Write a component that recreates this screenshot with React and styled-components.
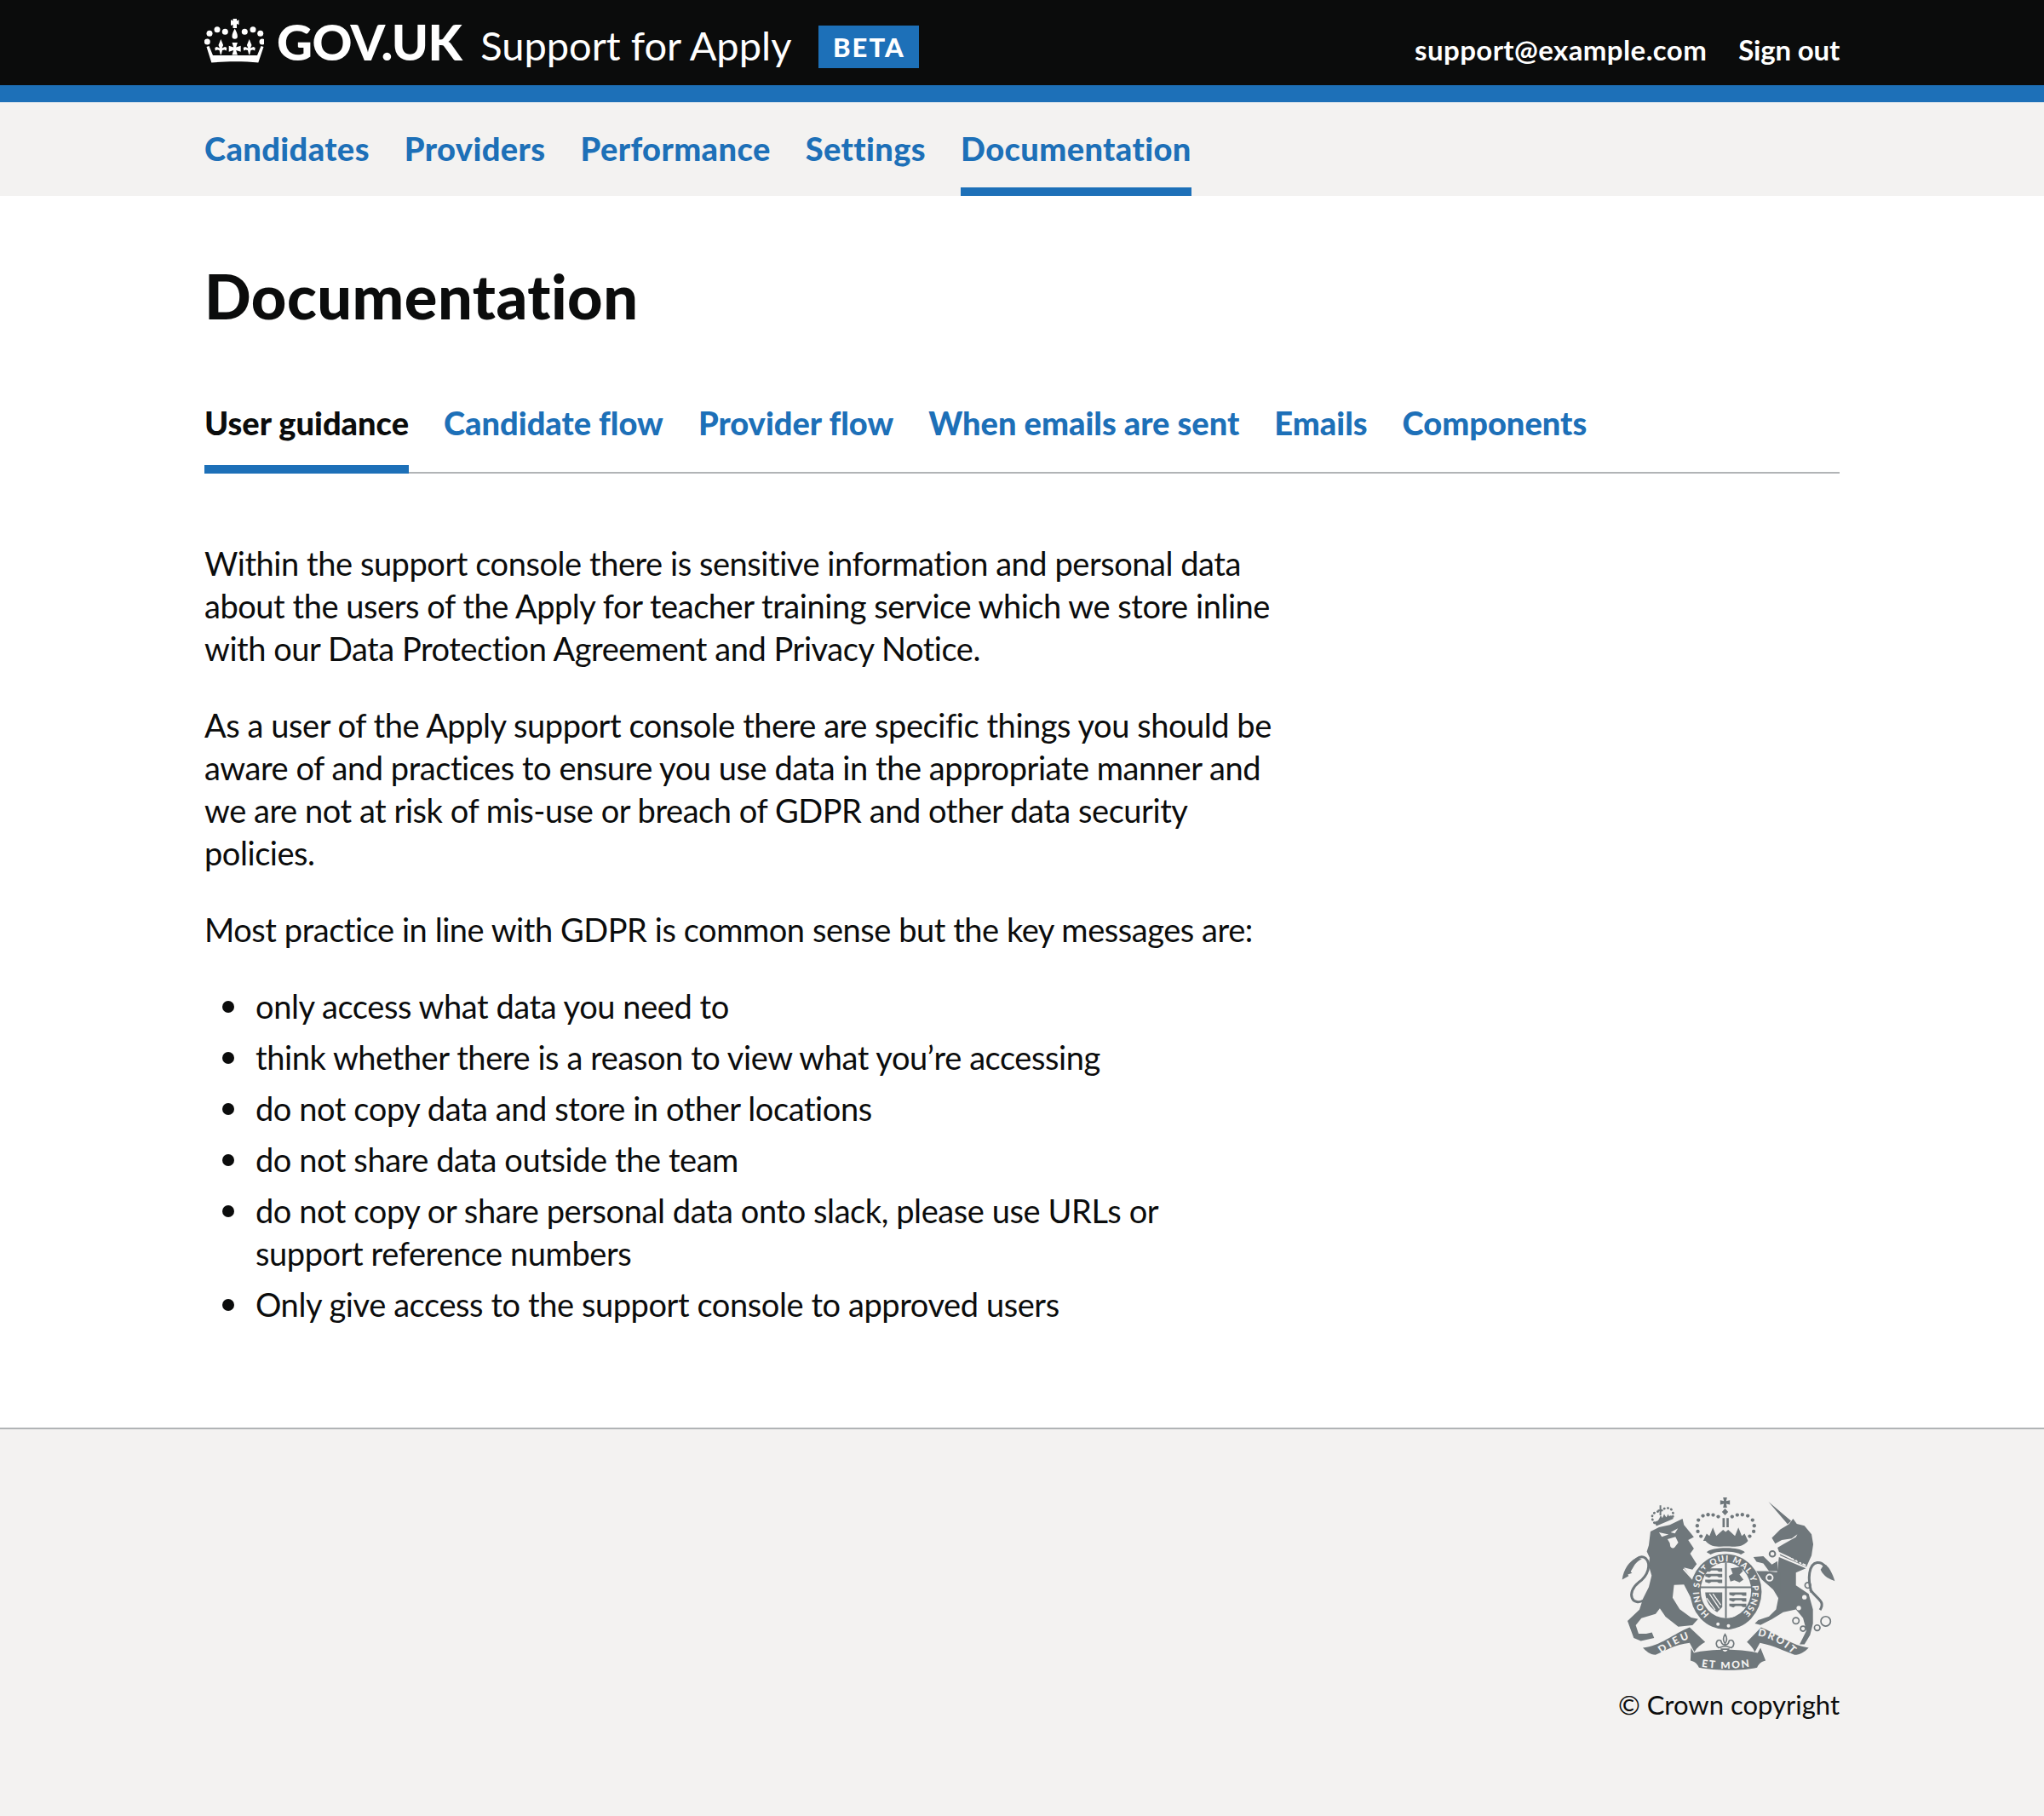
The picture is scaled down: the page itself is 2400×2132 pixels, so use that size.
import React from 'react'
import styled, { createGlobalStyle } from 'styled-components'

const GlobalStyle = createGlobalStyle`
  html, body {
    margin: 0;
    padding: 0;
    background: #fff;
    color: #0b0c0c;
    font-family: "Lato", "Noto Sans", sans-serif;
  }

  /* the font shorthand resets this, so it has to be forced */
  * {
    font-variant-ligatures: none !important;
  }
`

const Page = styled.div`
  height: 2132px;
  display: flex;
  flex-direction: column;
`

const Container = styled.div`
  width: 1920px;
  margin: 0 auto;
`

const Header = styled.header`
  background: #0b0c0c;
  border-bottom: 20px solid #1d70b8;
`

const HeaderInner = styled(Container)`
  height: 100px;
  display: flex;
  justify-content: space-between;
  color: #fff;
`

const Brand = styled.div`
  display: flex;
  align-items: flex-start;
`

const LogoMark = styled.svg`
  margin-top: 20px;
  fill: #fff;
`

const Wordmark = styled.span`
  font: 900 58px/1 "Lato", sans-serif;
  letter-spacing: -0.6px;
  margin: 20px 0 0 15px;
`

const ServiceName = styled.span`
  font: 400 47px/1 "Lato", sans-serif;
  margin: 30px 0 0 22px;
`

const BetaTag = styled.span`
  background: #1d70b8;
  font: 900 31px/50px "Lato", sans-serif;
  letter-spacing: 2px;
  width: 118px;
  text-align: center;
  margin: 30px 0 0 32px;
`

const AccountLinks = styled.div`
  display: flex;
  gap: 37px;
  padding-top: 39px;
  font: 700 33px/38px "Lato", sans-serif;
`

const AccountLink = styled.span`
  letter-spacing: ${(p) => p.$tracking};
`

const PrimaryNav = styled.nav`
  background: #f3f2f1;
`

const NavList = styled(Container)`
  height: 110px;
  display: flex;
  gap: 41px;
`

const NavItem = styled.a`
  height: 110px;
  box-sizing: border-box;
  padding-top: 29px;
  font: 900 38px/50px "Lato", sans-serif;
  letter-spacing: 0.4px;
  color: #1d70b8;
  border-bottom: ${(p) => (p.$active ? '10px solid #1d70b8' : '0')};
`

const Main = styled(Container)`
  flex: 1;
`

const Title = styled.h1`
  font: 900 72px/80px "Lato", sans-serif;
  letter-spacing: 0.5px;
  margin: 0;
  padding-top: 77px;
`

const Tabs = styled.div`
  display: flex;
  gap: 41px;
  margin-top: 72px;
  height: 95px;
  border-bottom: 2px solid #b1b4b6;
`

const Tab = styled.a`
  height: 97px;
  box-sizing: border-box;
  padding-top: 12px;
  font: 900 38px/50px "Lato", sans-serif;
  color: ${(p) => (p.$active ? '#0b0c0c' : '#1d70b8')};
  border-bottom: ${(p) => (p.$active ? '10px solid #1d70b8' : '0')};
`

const Body = styled.div`
  width: 1260px;
  padding-top: 80px;
`

const Para = styled.p`
  font: 400 38px/50px "Lato", sans-serif;
  letter-spacing: -0.45px;
  margin: 0 0 40px;
`

const List = styled.ul`
  list-style: none;
  margin: 0;
  padding: 0 20px 0 60px;
`

const Item = styled.li`
  position: relative;
  font: 400 38px/50px "Lato", sans-serif;
  letter-spacing: -0.42px;
  margin-bottom: 10px;

  &::before {
    content: '';
    position: absolute;
    left: -39px;
    top: 19px;
    width: 14px;
    height: 14px;
    border-radius: 50%;
    background: #0b0c0c;
  }
`

const Footer = styled.footer`
  background: #f3f2f1;
  border-top: 2px solid #b1b4b6;
  height: 456px;
  box-sizing: border-box;
`

const FooterInner = styled(Container)`
  display: flex;
  flex-direction: column;
  align-items: flex-end;
  padding-top: 78px;
`

const CrestMark = styled.svg`
  margin-right: 3px;
  font-family: "Lato", sans-serif;
  font-weight: 900;
`

const Copyright = styled.span`
  font: 400 31px/40px "Lato", sans-serif;
  margin-top: 18px;
`

const CrownLogo = () => (
  <LogoMark width="70" height="60" viewBox="20 10 70 60">
    <path d="M53.500 12h4.500v2.500l2.500-1.200v5.800l-2.500-1.200V23h-4.500v-4.100L51 20.100v-6.800l2.500 1.200z" />
    <path d="M55.700 23.500c1.500 3 3.200 6 3.200 9a3.200 3.200 0 0 1-6.400 0c0-3 1.700-6 3.200-9z" />
    {[[26, 29.3], [35, 24.7], [44.3, 27.3], [67.3, 27.3], [77, 24.7], [85.7, 29.3], [23.3, 39], [88, 39]].map(([x, y]) => (
      <circle key={x} cx={x} cy={y} r="3.500" />
    ))}
    <path d="M22.500 45l3-1 4.500 11h52l4.500-11 3 1-6.200 18.500c-16-1.600-39-1.600-55 0z" />
    {[39.3, 72.7].map((x) => (
      <path key={x} d={`M${x} 36l2.800 7-1.500 3.500 3.500-1.500 2.200 1-.5 3.500-2.200-1-2.500.5-.8 3-.5 2h-1l-.5-2-.8-3-2.500-.5-2.200 1-.5-3.500 2.200-1 3.500 1.500-1.500-3.500z`} />
    ))}
    <path d="M52.500 40h6.400l-1.700 5.500 5.500-1.700v7l-5.500-1.700 1.700 5.400h-6.400l1.700-5.400-5.500 1.700v-7l5.500 1.700z" />
  </LogoMark>
)

const Ink = '#6f777b'
const Paper = '#f3f2f1'

const Crest = () => (
  <CrestMark width="253" height="207" viewBox="130 80 760 620">
    {/* lion */}
    <path fill={Ink} d="M232 205l30-15 38-8 45-22 5 22 35 43-20 10 20 30-13 18 23 37-15 20-30-8 35 48 15 45-25 15-25-48-35 2-5 45 25 40 40 30 25 5-20 22-50 5-45-35-20-30-15 20-50 15-20 25 10 30 27 0 20-5 8 20-47 10-25-10-22-60 42-40 13-40 20-40 10-40-10-35 3-28-10-22 7-22z" />
    <path fill={Paper} d="M262 208l34 8-24 8zM303 208l26-14-11 18zM292 232l28-8 10 20-12 16a9 9 0 0 1-16-2l-2-12zM350 335l36 40-4 4-36-40z" />
    <path fill="none" stroke={Ink} strokeWidth="9" d="M215 445c-50 30-70-25-25-60 35-25 45-65 25-85-20-15-45 5-60 45" />
    <path fill={Ink} d="M132 375c5-35 25-65 48-75l22 2c-22 8-30 28-40 45l5 5-15 5 3 5z" />
    <path fill="none" stroke={Ink} strokeWidth="8" strokeDasharray="1 12" strokeLinecap="round" d="M246 175c-20-25 0-42 18-40 15-15 40-18 46 0 4 12 2 18-3 24" />
    <path fill={Ink} d="M245 172l60-24 8 12-60 26zM258 128h6v-15h6v15h6v6h-6v14h-6v-14h-6zM262 162l6-14 6 10 6-14 8 12 6-12 5 10-45 18z" />
    {/* unicorn */}
    <path fill={Ink} d="M648 100l80 68-12 12zM660 228l30-30 30-18 15-20 13 18 27 7 25 30 6 35-6 40-18 40-92-40-10-28 20-12 45-25 5-10-20 15-35 5-23 13z" />
    <path fill={Ink} d="M685 295l95 40-35 15v45l45 30 15 55v50l-10 40-20 33h-17l24-48-12-45-25-30-45 10-40 25-40 20-20-5 12-12 38-13 25-25 8-40-18-30 15-70z" />
    <path fill={Ink} d="M680 310l-20 12-30-30-35 3 11 17 24 6 20 27h30zM690 350l-50-5-35 0 20 30 40 35 25 10z" />
    <path fill="none" stroke={Paper} strokeWidth="6" d="M685 280l95 45" />
    <path fill={Ink} d="M688 262l8 14 6-8 5 14 7-6 4 14 8-5 3 14 8-4 2 13 10-4 3 13 10-6 4 12 8-12-82-42z" />
    <circle cx="652" cy="368" r="11" fill="none" stroke={Paper} strokeWidth="6" />
    <circle cx="662" cy="284" r="10" fill="none" stroke={Ink} strokeWidth="6" />
    {[[775, 437], [755, 475]].map(([x, y]) => (
      <circle key={x} cx={x} cy={y} r="8" fill={Paper} />
    ))}
    {[[787, 395, 10], [745, 520, 11], [770, 548, 9], [820, 545, 10], [850, 522, 17]].map(([x, y, r]) => (
      <circle key={x} cx={x} cy={y} r={r} fill="none" stroke={Ink} strokeWidth="5" />
    ))}
    <path fill="none" stroke={Ink} strokeWidth="9" d="M800 420c-15-50-10-100 20-105 25-3 35 25 50 55M795 410c25 35 55 40 35 72" />
    <path fill={Ink} d="M845 320c15 5 30 35 37 60-15-5-40-15-50-40z" />
    {/* royal crown */}
    {[[397, 185], [401, 165], [417, 150], [435, 146], [453, 147], [471, 153], [520, 153], [538, 147], [556, 146], [575, 150], [592, 165], [598, 185], [596, 205], [582, 222], [410, 222], [399, 205]].map(([x, y]) => (
      <circle key={`${x}-${y}`} cx={x} cy={y} r="6.500" fill={Ink} />
    ))}
    <path fill={Ink} d="M488 85h14l-3 13 13-3v16l-13-3 3 13h-14l3-13-13 3V95l13 3zM495 124l11 12-11 12-11-12zM486 158h8v32h-8zM500 158h8v32h-8z" />
    <path fill={Ink} d="M418 238l12-25 10 8 12-30 12 30 24-22 9 8 9-8 24 22 12-30 12 30 10-8 12 25c-20 25-50 20-75 20s-55 5-75-20zM430 278c20-20 115-20 135 0l-14 8c-25-14-85-14-107 0z" />
    {/* garter and shield */}
    <ellipse cx="498" cy="418" rx="126" ry="133" fill={Ink} />
    <path id="garter-band" fill="none" d="M440 497A94 104 0 1 1 558 495" />
    <text fontSize="30" fill={Paper}>
      <textPath href="#garter-band" textLength="490">HONI SOIT QUI MAL Y PENSE</textPath>
    </text>
    <ellipse cx="498" cy="413" rx="89" ry="98" fill={Paper} />
    <path fill="none" stroke={Ink} strokeWidth="6" d="M498 315v196M409 402h178" />
    {[0, 1, 2].map((i) => (
      <g key={i} fill={Ink}>
        <path d={`M425 ${335 + i * 20}h60v12h-12l-6-4h-20l-8 5-14-5z`} />
        <path d={`M510 ${420 + i * 20}h60v12h-12l-6-4h-20l-8 5-14-5z`} />
      </g>
    ))}
    <path fill={Ink} d="M515 335l35-5 8 15-12 12 14 18-14 10-18-8-14 5-6-20 14-8z" />
    <path fill={Ink} d="M425 420h60v52l-18 18c-25-15-40-38-42-70z" />
    <path fill="none" stroke={Paper} strokeWidth="4" d="M440 425l35 52M452 425l28 40M430 440l30 42" />
    {/* motto */}
    <path fill={Ink} d="M205 615c60-5 110-50 165-72l55 52c-15 8-30 20-38 35l-17-32c-50 5-90 30-120 42-20 0-35-15-45-25zM375 615l10 18c60-15 165-15 225 0l10-18 18 45c-20 5-25 15-30 25-50 12-145 12-205 0-5-10-10-20-30-25zM572 595l50-52c60 25 110 65 168 72-15 15-30 25-50 25-35-12-70-32-122-42l-18 32c-8-15-18-27-28-35z" />
    <path id="motto-left" fill="none" d="M270 636Q318 600 372 582" />
    <path id="motto-mid" fill="none" d="M412 682Q495 695 582 682" />
    <path id="motto-right" fill="none" d="M610 572Q680 585 735 640" />
    <g fontSize="36" fill={Paper}>
      <text><textPath href="#motto-left" textLength="112">DIEU</textPath></text>
      <text><textPath href="#motto-mid" textLength="170">ET MON</textPath></text>
      <text><textPath href="#motto-right" textLength="140">DROIT</textPath></text>
    </g>
    <path fill={Paper} stroke={Ink} strokeWidth="5" d="M495 568c-8 12-8 22 0 32 8-10 8-20 0-32zM480 590c-15-8-22 15-8 25 8 0 10-5 23-5 13 0 15 5 23 5 14-10 7-33-8-25-3 10-5 15-15 15s-12-5-15-15zM482 620c4 15 22 15 26 0z" />
    <circle cx="470" cy="532" r="6" fill={Paper} />
    <circle cx="507" cy="538" r="6" fill={Paper} />
  </CrestMark>
)

const mainLinks = ['Candidates', 'Providers', 'Performance', 'Settings', 'Documentation']
const tabLinks = ['User guidance', 'Candidate flow', 'Provider flow', 'When emails are sent', 'Emails', 'Components']

const App = () => (
  <Page>
    <GlobalStyle />
    <Header>
      <HeaderInner>
        <Brand>
          <CrownLogo />
          <Wordmark>GOV.UK</Wordmark>
          <ServiceName>Support for Apply</ServiceName>
          <BetaTag>BETA</BetaTag>
        </Brand>
        <AccountLinks>
          <AccountLink $tracking="0.4px">support@example.com</AccountLink>
          <AccountLink $tracking="-0.2px">Sign out</AccountLink>
        </AccountLinks>
      </HeaderInner>
    </Header>
    <PrimaryNav>
      <NavList>
        {mainLinks.map((l) => (
          <NavItem key={l} $active={l === 'Documentation'}>{l}</NavItem>
        ))}
      </NavList>
    </PrimaryNav>
    <Main>
      <Title>Documentation</Title>
      <Tabs>
        {tabLinks.map((l) => (
          <Tab key={l} $active={l === 'User guidance'}>{l}</Tab>
        ))}
      </Tabs>
      <Body>
        <Para>
          Within the support console there is sensitive information and personal data
          about the users of the Apply for teacher training service which we store inline
          with our Data Protection Agreement and Privacy Notice.
        </Para>
        <Para>
          As a user of the Apply support console there are specific things you should be
          aware of and practices to ensure you use data in the appropriate manner and
          we are not at risk of mis-use or breach of GDPR and other data security
          policies.
        </Para>
        <Para>Most practice in line with GDPR is common sense but the key messages are:</Para>
        <List>
          <Item>only access what data you need to</Item>
          <Item>think whether there is a reason to view what you’re accessing</Item>
          <Item>do not copy data and store in other locations</Item>
          <Item>do not share data outside the team</Item>
          <Item>do not copy or share personal data onto slack, please use URLs or support reference numbers</Item>
          <Item>Only give access to the support console to approved users</Item>
        </List>
      </Body>
    </Main>
    <Footer>
      <FooterInner>
        <Crest />
        <Copyright>© Crown copyright</Copyright>
      </FooterInner>
    </Footer>
  </Page>
)

export default App
